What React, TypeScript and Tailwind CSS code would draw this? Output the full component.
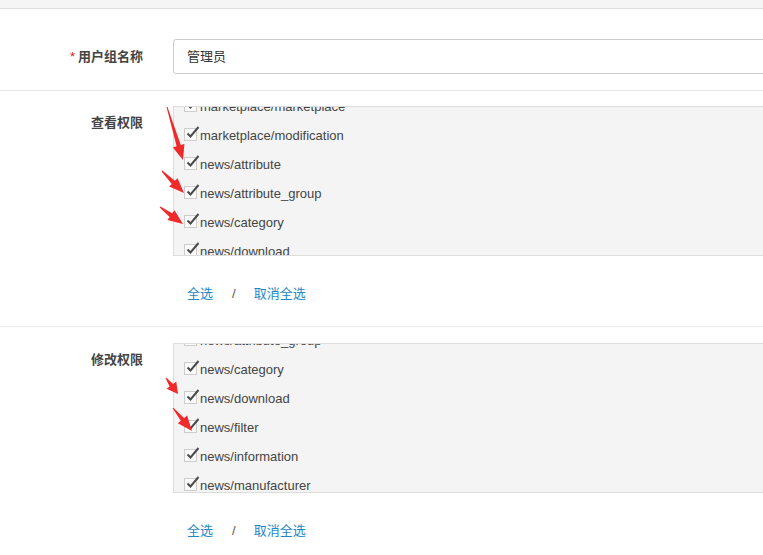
import React from 'react';

const FONT = { fontFamily: '"Liberation Sans", "Noto Sans CJK SC", Arial, sans-serif' };

const viewPerms = [
  'marketplace/marketplace',
  'marketplace/modification',
  'news/attribute',
  'news/attribute_group',
  'news/category',
  'news/download',
  'news/filter',
];

const editPerms = [
  'news/attribute_group',
  'news/category',
  'news/download',
  'news/filter',
  'news/information',
  'news/manufacturer',
  'news/review',
];

// red annotation arrows, [fromX, fromY, tipX, tipY] in page pixels
const arrows: [number, number, number, number][] = [
  [167, 107, 183, 160],
  [162, 171, 184, 193],
  [160, 207, 183, 224],
  [166, 378, 178, 394],
  [173, 408, 192, 431],
];

const arrowPoints = ([x1, y1, x2, y2]: [number, number, number, number]) => {
  const dx = x2 - x1;
  const dy = y2 - y1;
  const len = Math.hypot(dx, dy);
  const ux = dx / len;
  const uy = dy / len;
  const nx = -uy;
  const ny = ux;
  const head = Math.min(15, len * 0.55);
  const bx = x2 - ux * head;
  const by = y2 - uy * head;
  const p = (x: number, y: number) => `${x.toFixed(1)},${y.toFixed(1)}`;
  return [
    p(x1 + nx * 0.5, y1 + ny * 0.5),
    p(bx + nx * 2.2, by + ny * 2.2),
    p(bx + nx * 6, by + ny * 6),
    p(x2, y2),
    p(bx - nx * 6, by - ny * 6),
    p(bx - nx * 2.2, by - ny * 2.2),
    p(x1 - nx * 0.5, y1 - ny * 0.5),
  ].join(' ');
};

const CheckBox: React.FC = () => (
  <span className="relative inline-block w-[13px] h-[13px] border border-[#cdcdcd] bg-[#fafafa] shrink-0 -mt-[2px]">
    <svg className="absolute -top-[4px] left-[0px]" width="15" height="15" viewBox="0 0 15 15">
      <path d="M2.5 8.5 L5.5 11.5 L13.5 2" fill="none" stroke="#4a4a4a" strokeWidth="2" />
    </svg>
  </span>
);

const PermBox: React.FC<{ items: string[]; offset: string }> = ({ items, offset }) => (
  <div className="h-[150px] w-[700px] border border-[#dcdcdc] bg-[#f4f4f4] overflow-hidden">
    <div className={offset}>
      {items.map((it) => (
        <div key={it} className="h-[29px] flex items-center pl-[10px] gap-[3px] text-[13px] text-[#444]">
          <CheckBox />
          <span>{it}</span>
        </div>
      ))}
    </div>
  </div>
);

const Links: React.FC = () => (
  <div className="flex items-center text-[13px] pl-[14px] mt-[28px] h-[20px]">
    <span className="text-[#1e88c7]">全选</span>
    <span className="text-[#555] ml-[19px] mr-[18px]">/</span>
    <span className="text-[#1e88c7]">取消全选</span>
  </div>
);

const App: React.FC = () => {
  return (
    <div className="relative w-full h-[555px] overflow-hidden bg-white" style={FONT}>
      <div className="h-[9px] bg-[#f5f5f5] border-b border-[#dddddd]" />

      <div className="flex pt-[30px] pb-[16px] border-b border-[#e6e6e6]">
        <div className="w-[143px] shrink-0 text-right pt-[8px] text-[13px] font-bold text-[#444]">
          <span className="text-[#e02020] font-normal mr-[3px]">*</span>用户组名称
        </div>
        <div className="ml-[30px] shrink-0 w-[700px] h-[35px] border border-[#cccccc] rounded-[3px] flex items-center pl-[13px] text-[13px] text-[#333]">
          管理员
        </div>
      </div>

      <div className="flex pt-[15px] pb-[22px] border-b border-[#ececec]">
        <div className="w-[143px] shrink-0 text-right pt-[7px] text-[13px] font-bold text-[#444]">查看权限</div>
        <div className="ml-[30px] shrink-0">
          <PermBox items={viewPerms} offset="-mt-[15px]" />
          <Links />
        </div>
      </div>

      <div className="flex pt-[16px]">
        <div className="w-[143px] shrink-0 text-right pt-[7px] text-[13px] font-bold text-[#444]">修改权限</div>
        <div className="ml-[30px] shrink-0">
          <PermBox items={editPerms} offset="-mt-[18px]" />
          <Links />
        </div>
      </div>

      <svg className="absolute inset-0 pointer-events-none" width="763" height="555">
        {arrows.map((a, i) => (
          <polygon key={i} points={arrowPoints(a)} fill="#f02a2a" />
        ))}
      </svg>
    </div>
  );
};

export default App;
